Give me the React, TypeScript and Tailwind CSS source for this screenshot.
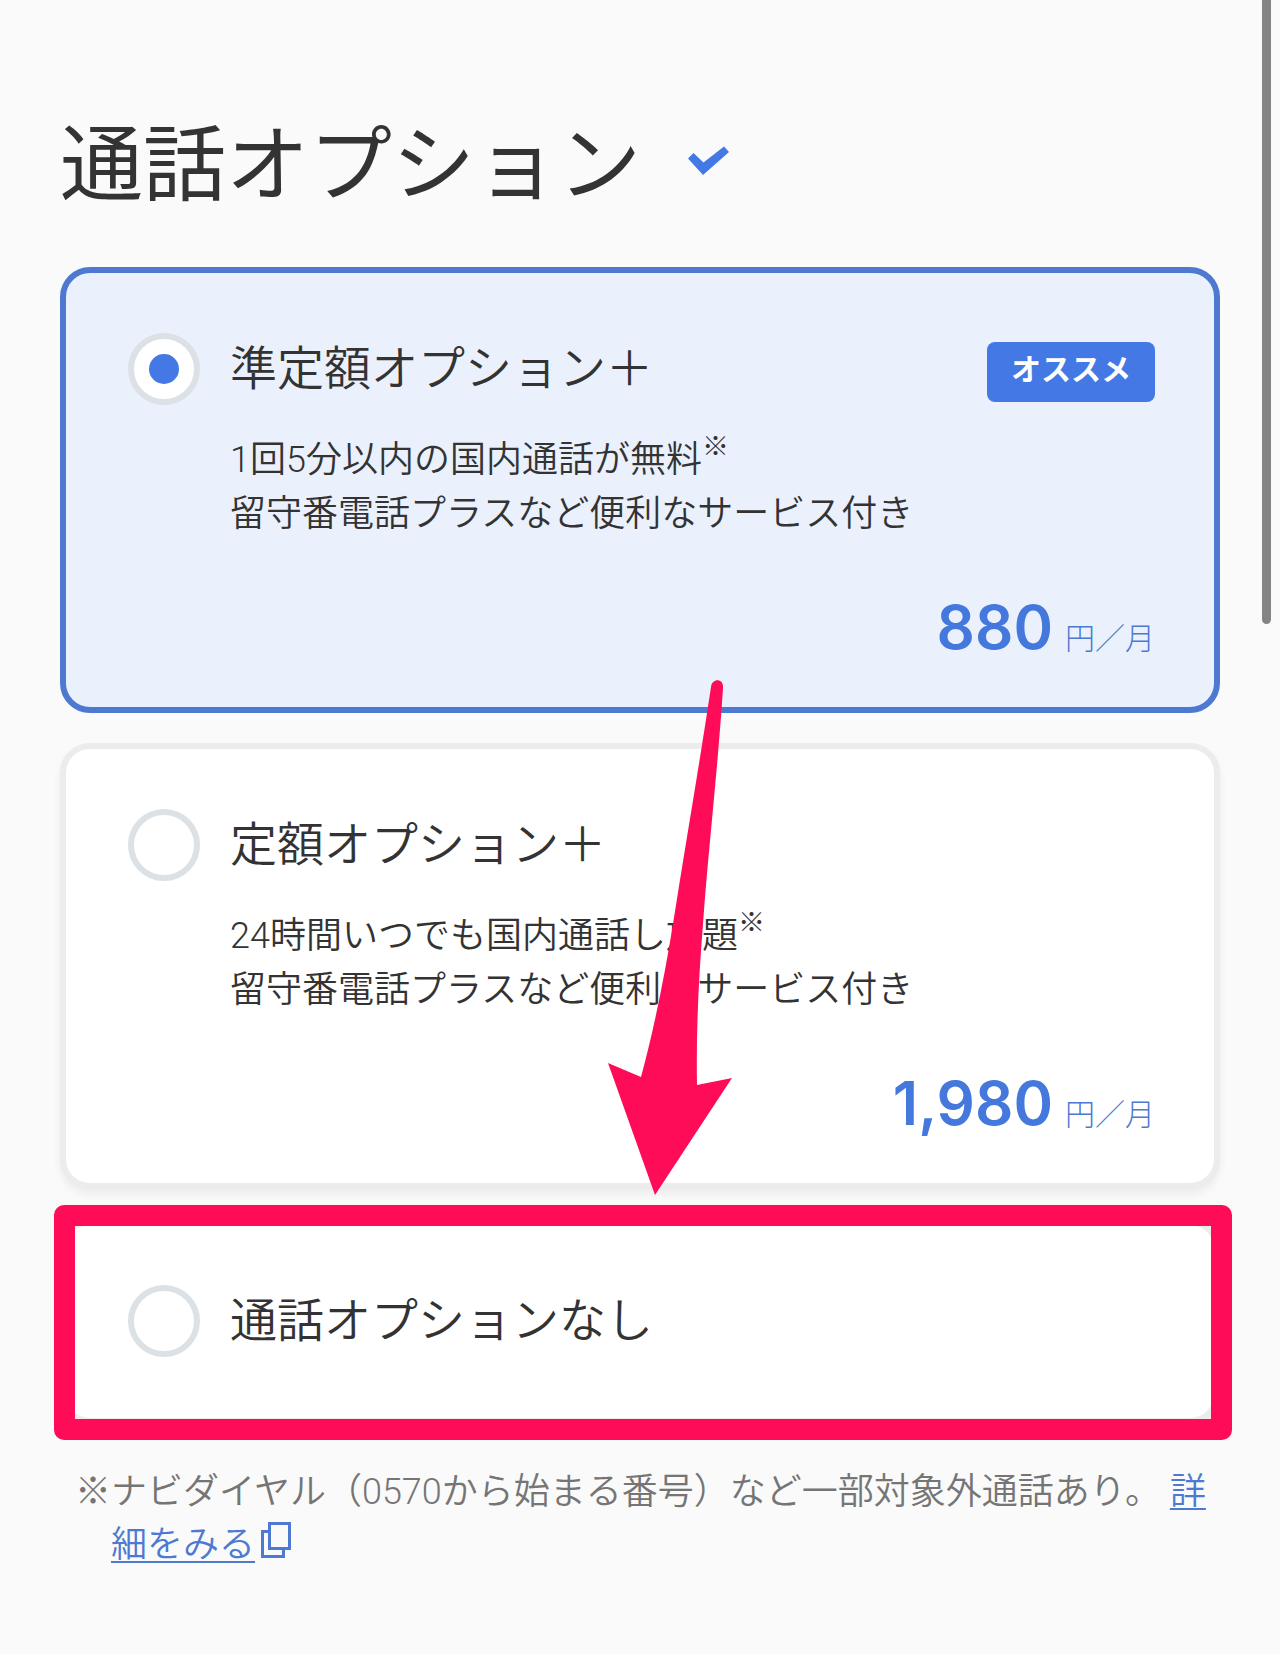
import { useState, type ReactNode } from "react";

type Option = {
  id: string;
  name: string;
  lines?: ReactNode;
  price?: string;
  badge?: string;
};

const Sup = () => (
  <sup className="relative -top-4 align-baseline font-['Noto_Sans_CJK_JP',sans-serif] text-[27px] leading-none">※</sup>
);

const OPTIONS: Option[] = [
  {
    id: "semi",
    name: "準定額オプション＋",
    lines: (
      <>
        1回5分以内の国内通話が無料
        <Sup />
        <br />
        留守番電話プラスなど便利なサービス付き
      </>
    ),
    price: "880",
    badge: "オススメ",
  },
  {
    id: "flat",
    name: "定額オプション＋",
    lines: (
      <>
        24時間いつでも国内通話し放題
        <Sup />
        <br />
        留守番電話プラスなど便利なサービス付き
      </>
    ),
    price: "1,980",
  },
  { id: "none", name: "通話オプションなし" },
];

function OptionCard({ option, checked, onSelect }: { option: Option; checked: boolean; onSelect: () => void }) {
  return (
    <label
      htmlFor={option.id}
      className={
        "block cursor-pointer rounded-[30px] border-[6px] pt-[59px] pr-[59px] pl-[62px] " +
        (option.price ? "pb-[50px] " : "pb-[60px] ") +
        (checked
          ? "border-[#4d79d1] bg-[#eaf1fd]"
          : "border-[#ececec] bg-white shadow-[0_5px_8px_rgba(0,0,0,0.06)]")
      }
    >
      <span className="flex items-center">
        <input
          id={option.id}
          type="radio"
          name="call-option"
          checked={checked}
          onChange={onSelect}
          className="grid size-[72px] shrink-0 appearance-none place-items-center rounded-full border-[6px] border-[#dbe1e5] bg-white before:size-[30px] before:rounded-full checked:before:bg-[#4478e4]"
        />
        <span className="ml-[30px] flex-1 text-[47px] leading-[74px]">{option.name}</span>
        {option.badge && (
          <span className="mt-[6px] h-[60px] rounded-lg bg-[#4478e4] px-6 text-[30px] leading-[56px] font-bold text-white">
            {option.badge}
          </span>
        )}
      </span>
      {option.lines && <span className="mt-[27px] ml-[102px] block text-[36px] leading-[54px]">{option.lines}</span>}
      {option.price && (
        <span className="mt-[56px] flex items-baseline justify-end gap-[12px] text-[#4d79d1]">
          <span className="font-[Inter,sans-serif] text-[60px] leading-[60px] font-semibold text-[#4478dc]">
            {option.price}
          </span>
          <span className="text-[30px] leading-none font-light">円／月</span>
        </span>
      )}
    </label>
  );
}

function Arrow() {
  return (
    <svg
      aria-hidden="true"
      viewBox="0 0 126 516"
      className="pointer-events-none absolute bottom-[calc(100%+24px)] left-[548px] h-[516px] w-[126px]"
      fill="#ff0c59"
    >
      <path d="M103 8C104 -1 116 -1 115 9C110 88 100 174 95 245C91 295 88 350 89 406L124 399L47 516L0 384L33 398C46 350 57 295 65 245C77 168 91 88 103 8Z" />
    </svg>
  );
}

export default function App() {
  const [selected, setSelected] = useState("semi");
  return (
    <main className="relative min-h-screen bg-[#fafafa] px-[60px] pt-[106px] pb-[82px] font-[Roboto,'Noto_Sans_CJK_JP',sans-serif] font-[350] text-[#333]">
      <div className="absolute top-0 right-[9px] h-[624px] w-[9px] rounded-b-full bg-[#848484]" />
      <header className="flex items-center">
        <h1 className="text-[83px] leading-[120px] font-normal">通話オプション</h1>
        <svg aria-hidden="true" viewBox="0 0 41 29" className="mb-[12px] ml-[47px] h-[29px] w-[41px]" fill="#4478e4">
          <path d="M0 12.5L5.5 7L15.5 16.5L36 0.5L41 6L15 29Z" />
        </svg>
      </header>
      <div className="mt-[41px] flex flex-col gap-[30px]">
        {OPTIONS.map((o) => (
          <div key={o.id} className="relative">
            <OptionCard option={o} checked={selected === o.id} onSelect={() => setSelected(o.id)} />
            {o.id === "none" && (
              <>
                <div className="pointer-events-none absolute -top-[14px] -right-[12px] -bottom-[16px] -left-[6px] rounded-[10px] border-[21px] border-[#ff0c59]" />
                <Arrow />
              </>
            )}
          </div>
        ))}
      </div>
      <p className="mt-[38px] ml-[15px] pl-[36px] -indent-[36px] text-[36px] leading-[53px] break-all text-[#757575]">
        <span className="font-['Noto_Sans_CJK_JP',sans-serif]">※</span>
        ナビダイヤル（0570から始まる番号）など一部対象外通話あり。{" "}
        <a href="#details" className="text-[#4d79d1] underline decoration-2 underline-offset-4">
          詳細をみる
        </a>
        <svg
          aria-hidden="true"
          viewBox="0 0 30 36"
          className="ml-1.5 inline-block h-[36px] w-[30px] align-[-1px]"
          fill="none"
          stroke="#4d79d1"
          strokeWidth="3"
        >
          <path d="M8.5 1.5H28.5V26.5H8.5ZM8 9.5H1.5V34.5H22.5V27" />
        </svg>
      </p>
    </main>
  );
}
